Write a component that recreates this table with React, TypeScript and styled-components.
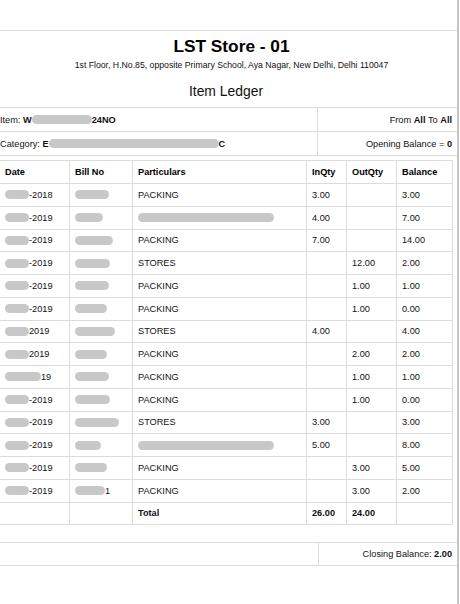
import React from "react";
import styled, { createGlobalStyle } from "styled-components";

const Global = createGlobalStyle`
  html, body { margin: 0; padding: 0; background: #fff; }
  body { font-family: "Liberation Sans", Arial, sans-serif; color: #111; overflow: hidden; }
`;

const Viewport = styled.div`
  width: 460px;
  height: 604px;
  overflow: hidden;
  background: #fff;
`;

const Page = styled.div`
  margin-left: -5px;
  width: 462px;
  height: 604px;
  padding-top: 30px;
  border-right: 2px solid #c4c4c4;
  box-sizing: content-box;
  font-size: 9.2px;
`;

const Header = styled.header`
  border-top: 1px solid #dcdcdc;
  border-bottom: 1px solid #dcdcdc;
  padding: 5px 0 8px;
  display: flex;
  flex-direction: column;
  align-items: center;
  text-align: center;
`;

const Brand = styled.div`
  align-self: stretch;
  padding-left: 11px;
  display: flex;
  flex-direction: column;
  align-items: center;
`;

const Title = styled.h1`
  margin: 0;
  font-size: 17.3px;
  line-height: 20px;
  font-weight: 700;
  color: #000;
`;

const Address = styled.div`
  margin-top: 4px;
  font-size: 8.7px;
  line-height: 10px;
  color: #111;
  white-space: nowrap;
`;

const Subtitle = styled.h2`
  margin: 13px 0 0;
  font-size: 13.9px;
  line-height: 16px;
  font-weight: 400;
  color: #111;
`;

const InfoRow = styled.div`
  display: grid;
  grid-template-columns: 1fr 140px;
  height: 23px;
  border-bottom: 1px solid #dcdcdc;
`;

const InfoCell = styled.div<{ $right?: boolean }>`
  display: flex;
  align-items: center;
  justify-content: ${(p) => (p.$right ? "flex-end" : "flex-start")};
  padding: 0 5px;
  white-space: nowrap;
  ${(p) => (p.$right ? "border-left: 1px solid #dcdcdc;" : "")}
`;

const TableWrap = styled.div`
  padding: 4px 5px 0 3px;
`;

const Table = styled.table`
  width: 454px;
  border-collapse: collapse;
  table-layout: fixed;
`;

const Th = styled.th`
  height: 22px;
  border: 1px solid #dcdcdc;
  padding: 0 5px;
  text-align: left;
  font-weight: 700;
  font-size: 9.2px;
  color: #000;
  white-space: nowrap;
  &:first-child { padding-left: 6px; }
`;

const Td = styled.td<{ $bold?: boolean }>`
  height: 21.75px;
  border: 1px solid #dcdcdc;
  padding: 0 5px;
  text-align: left;
  font-size: 9.2px;
  font-weight: ${(p) => (p.$bold ? 700 : 400)};
  color: #111;
  white-space: nowrap;
  overflow: hidden;
  &:first-child { padding-left: 6px; }
`;

const Blob = styled.span<{ $w: number }>`
  display: inline-block;
  vertical-align: middle;
  width: ${(p) => p.$w}px;
  height: 9px;
  border-radius: 5px;
  background: #c8c8c8;
  filter: blur(0.7px);
  margin-top: -1px;
`;

const ClosingRow = styled.div`
  margin-top: 17px;
  display: grid;
  grid-template-columns: 1fr 139px;
  height: 22px;
  border-top: 1px solid #dcdcdc;
  border-bottom: 1px solid #dcdcdc;
`;

type Row = {
  datePrefix: number;
  date: string;
  bill: number;
  billTail?: string;
  part?: string;
  partBlob?: number;
  inq?: string;
  outq?: string;
  bal: string;
};

const rows: Row[] = [
  { datePrefix: 24, date: "-2018", bill: 34, part: "PACKING", inq: "3.00", bal: "3.00" },
  { datePrefix: 24, date: "-2019", bill: 28, partBlob: 136, inq: "4.00", bal: "7.00" },
  { datePrefix: 24, date: "-2019", bill: 38, part: "PACKING", inq: "7.00", bal: "14.00" },
  { datePrefix: 24, date: "-2019", bill: 35, part: "STORES", outq: "12.00", bal: "2.00" },
  { datePrefix: 24, date: "-2019", bill: 34, part: "PACKING", outq: "1.00", bal: "1.00" },
  { datePrefix: 24, date: "-2019", bill: 32, part: "PACKING", outq: "1.00", bal: "0.00" },
  { datePrefix: 24, date: "2019", bill: 40, part: "STORES", inq: "4.00", bal: "4.00" },
  { datePrefix: 24, date: "2019", bill: 32, part: "PACKING", outq: "2.00", bal: "2.00" },
  { datePrefix: 36, date: "19", bill: 34, part: "PACKING", outq: "1.00", bal: "1.00" },
  { datePrefix: 24, date: "-2019", bill: 35, part: "PACKING", outq: "1.00", bal: "0.00" },
  { datePrefix: 24, date: "-2019", bill: 44, part: "STORES", inq: "3.00", bal: "3.00" },
  { datePrefix: 24, date: "-2019", bill: 26, partBlob: 136, inq: "5.00", bal: "8.00" },
  { datePrefix: 24, date: "-2019", bill: 32, part: "PACKING", outq: "3.00", bal: "5.00" },
  { datePrefix: 24, date: "-2019", bill: 30, billTail: "1", part: "PACKING", outq: "3.00", bal: "2.00" },
];

export default function App() {
  return (
    <Viewport>
      <Global />
      <Page>
        <Header>
          <Brand>
            <Title>LST Store - 01</Title>
            <Address>
              1st Floor, H.No.85, opposite Primary School, Aya Nagar, New Delhi, Delhi 110047
            </Address>
          </Brand>
          <Subtitle>Item Ledger</Subtitle>
        </Header>
        <InfoRow>
          <InfoCell>
            Item:&nbsp;<b>W</b>
            <Blob $w={60} />
            <b>24NO</b>
          </InfoCell>
          <InfoCell $right>
            From&nbsp;<b>All</b>&nbsp;To&nbsp;<b>All</b>
          </InfoCell>
        </InfoRow>
        <InfoRow>
          <InfoCell>
            Category:&nbsp;<b>E</b>
            <Blob $w={170} />
            <b>C</b>
          </InfoCell>
          <InfoCell $right>
            Opening Balance =&nbsp;<b>0</b>
          </InfoCell>
        </InfoRow>
        <TableWrap>
          <Table>
            <colgroup>
              <col style={{ width: 71 }} />
              <col style={{ width: 63 }} />
              <col style={{ width: 174 }} />
              <col style={{ width: 40 }} />
              <col style={{ width: 50 }} />
              <col style={{ width: 56 }} />
            </colgroup>
            <thead>
              <tr>
                <Th>Date</Th>
                <Th>Bill No</Th>
                <Th>Particulars</Th>
                <Th>InQty</Th>
                <Th>OutQty</Th>
                <Th>Balance</Th>
              </tr>
            </thead>
            <tbody>
              {rows.map((r, i) => (
                <tr key={i}>
                  <Td>
                    <Blob $w={r.datePrefix} />
                    {r.date}
                  </Td>
                  <Td>
                    <Blob $w={r.bill} />
                    {r.billTail}
                  </Td>
                  <Td>{r.part ?? <Blob $w={r.partBlob ?? 0} />}</Td>
                  <Td>{r.inq}</Td>
                  <Td>{r.outq}</Td>
                  <Td>{r.bal}</Td>
                </tr>
              ))}
              <tr>
                <Td />
                <Td />
                <Td $bold>Total</Td>
                <Td $bold>26.00</Td>
                <Td $bold>24.00</Td>
                <Td />
              </tr>
            </tbody>
          </Table>
        </TableWrap>
        <ClosingRow>
          <InfoCell />
          <InfoCell $right>
            Closing Balance:&nbsp;<b>2.00</b>
          </InfoCell>
        </ClosingRow>
      </Page>
    </Viewport>
  );
}
